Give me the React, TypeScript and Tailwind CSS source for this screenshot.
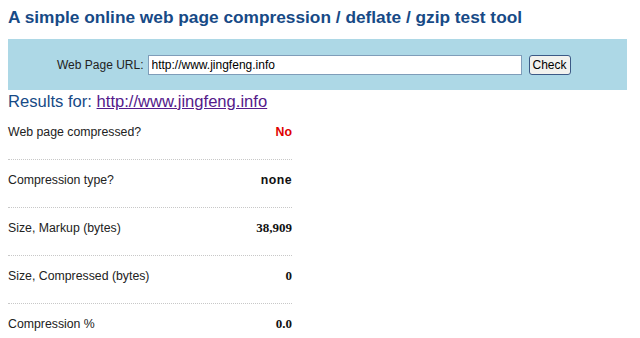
const rows: { label: string; value: string; className: string }[] = [
  { label: "Web page compressed?", value: "No", className: "text-[#e00000] font-bold font-['Liberation_Sans',Arial,sans-serif]" },
  { label: "Compression type?", value: "none", className: "text-[#111] font-bold tracking-[0.5px] font-['Liberation_Sans',Arial,sans-serif]" },
  { label: "Size, Markup (bytes)", value: "38,909", className: "text-[#111] font-bold font-['Liberation_Serif','Times_New_Roman',serif] text-[13px]" },
  { label: "Size, Compressed (bytes)", value: "0", className: "text-[#111] font-bold font-['Liberation_Serif','Times_New_Roman',serif] text-[13px]" },
  { label: "Compression %", value: "0.0", className: "text-[#111] font-bold font-['Liberation_Serif','Times_New_Roman',serif] text-[13px]" },
];

export default function App() {
  return (
    <div className="w-[640px] h-[338px] bg-white px-2 pt-[6px] font-['Liberation_Sans',Arial,sans-serif] overflow-hidden">
      <h1 className="text-[17.3px] leading-[23px] font-bold text-[#174a86]">
        A simple online web page compression / deflate / gzip test tool
      </h1>
      <div className="mt-[10px] w-[619px] h-[51px] bg-[#add8e6] flex items-center pl-[49px]">
        <label className="text-[12px] text-[#222] mr-[4px]">Web Page URL:</label>
        <input
          defaultValue="http://www.jingfeng.info"
          className="w-[374px] h-[20px] bg-white border border-[#7f9db9] px-[3px] text-[12px] text-black outline-none"
        />
        <button className="ml-[7px] h-[20px] px-[3px] text-[12px] text-black bg-[#f2f2ee] border border-[#3c5a86] rounded-[3px]">
          Check
        </button>
      </div>
      <div className="mt-[2px] text-[16.6px] leading-[20px] text-[#174a86]">
        Results for:{" "}
        <a href="#" className="text-[#551a8b] underline">
          http://www.jingfeng.info
        </a>
      </div>
      <div className="w-[284px]">
        {rows.map((r, i) => (
          <div
            key={r.label}
            className={`flex justify-between items-center pt-[13px] h-[48px] pb-[21px] text-[12.3px] leading-[14px] ${
              i < rows.length - 1 ? "border-b border-dotted border-[#c8c8c8]" : ""
            }`}
          >
            <span className="text-[#222]">{r.label}</span>
            <span className={r.className}>{r.value}</span>
          </div>
        ))}
      </div>
    </div>
  );
}
